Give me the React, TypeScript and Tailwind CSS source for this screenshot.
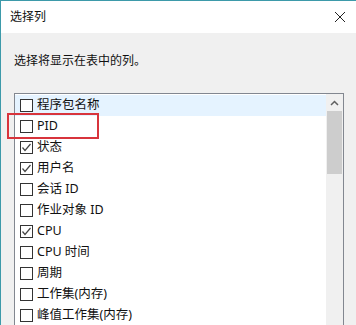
import React from "react";

const items: { label: string; checked: boolean }[] = [
  { label: "程序包名称", checked: false },
  { label: "PID", checked: false },
  { label: "状态", checked: true },
  { label: "用户名", checked: true },
  { label: "会话 ID", checked: false },
  { label: "作业对象 ID", checked: false },
  { label: "CPU", checked: true },
  { label: "CPU 时间", checked: false },
  { label: "周期", checked: false },
  { label: "工作集(内存)", checked: false },
  { label: "峰值工作集(内存)", checked: false },
];

function Box({ checked }: { checked: boolean }) {
  return (
    <div className="w-[13px] h-[13px] border border-[#333333] bg-white flex items-center justify-center shrink-0">
      {checked && (
        <svg width="11" height="11" viewBox="0 0 11 11">
          <polyline points="1.5,5.5 4,8.5 9.5,2" fill="none" stroke="#444" strokeWidth="1.2" />
        </svg>
      )}
    </div>
  );
}

export default function App() {
  const font = { fontFamily: '"Noto Sans", "Noto Sans CJK SC", sans-serif' };
  return (
    <div className="w-[356px] h-[325px] overflow-hidden bg-[#f0f0f0] border-l border-t border-[#3d9aaa] flex flex-col relative" style={font}>
      <div className="h-[32px] bg-white flex items-center justify-between pl-[9px] pr-[9px] shrink-0">
        <span className="text-[12px] text-[#111]">选择列</span>
        <svg width="12" height="12" viewBox="0 0 12 12" className="mr-[1px]">
          <path d="M1 1 L11 11 M11 1 L1 11" stroke="#222" strokeWidth="1" />
        </svg>
      </div>
      <div className="pl-[13px] pt-[19px] h-[60px] text-[12px] text-[#111] shrink-0">选择将显示在表中的列。</div>
      <div className="ml-[13px] w-[330px] flex-1 border border-[#828790] bg-white flex relative">
        <div className="flex-1 flex flex-col pt-[1px]">
          {items.map((it, i) => (
            <div
              key={i}
              className={`h-[21px] shrink-0 flex items-center pl-[5px] gap-[4px] text-[12.5px] text-[#111] ${i === 0 ? "bg-[#e5f3ff]" : ""}`}
            >
              <Box checked={it.checked} />
              <span>{it.label}</span>
            </div>
          ))}
        </div>
        <div className="w-[17px] bg-[#f0f0f0] flex flex-col items-center">
          <div className="h-[17px] w-full flex items-center justify-center">
            <svg width="9" height="6" viewBox="0 0 9 6">
              <polyline points="1,5 4.5,1.5 8,5" fill="none" stroke="#606060" strokeWidth="1.5" />
            </svg>
          </div>
          <div className="w-[15px] h-[63px] bg-[#cdcdcd]" />
        </div>
      </div>
      <div className="absolute left-[6px] top-[112px] w-[92px] h-[26px] border-2 border-[#d8343c]" />
    </div>
  );
}
